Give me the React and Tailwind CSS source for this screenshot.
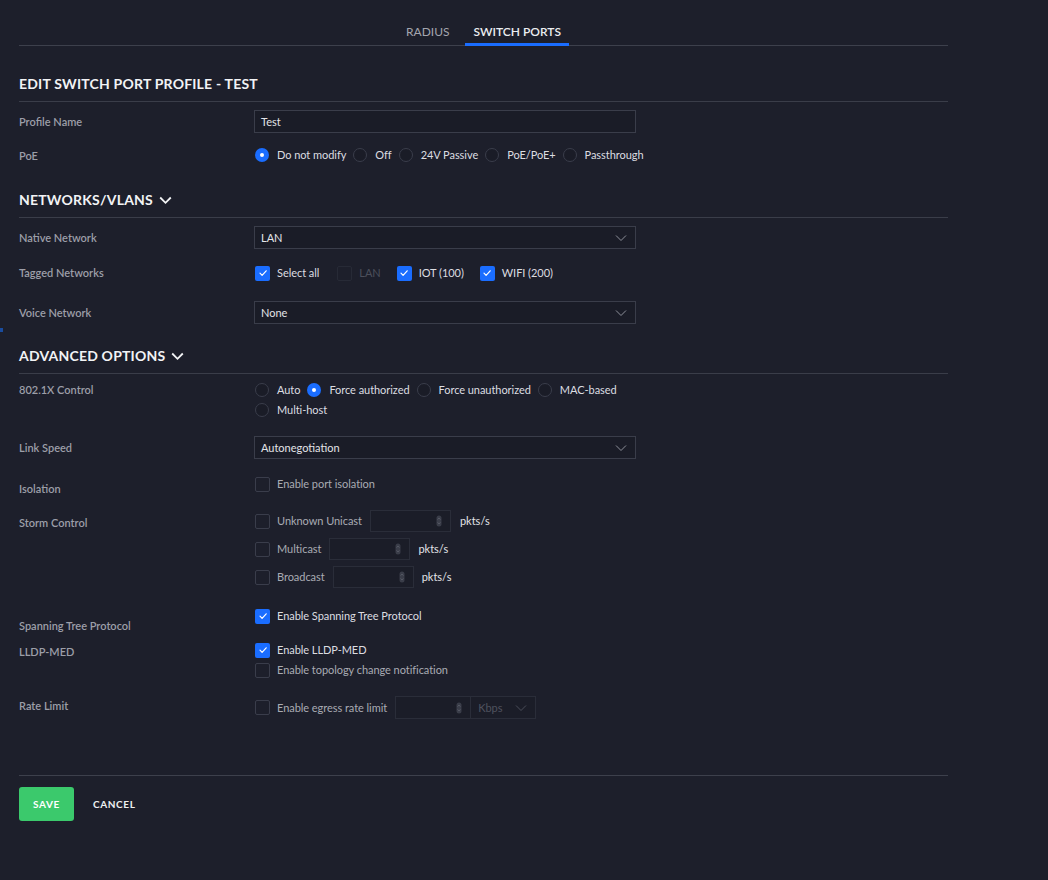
import React from "react";

const font = { fontFamily: "Lato, 'Open Sans', 'Liberation Sans', sans-serif" };

function Radio({ checked, label }) {
  return (
    <div className="flex items-center gap-[8px]">
      {checked ? (
        <span className="w-[14px] h-[14px] rounded-full bg-[#1a6dff] flex items-center justify-center">
          <span className="w-[4px] h-[4px] rounded-full bg-white" />
        </span>
      ) : (
        <span className="w-[14px] h-[14px] rounded-full border border-[#3a3d4b] bg-[#1a1c27]" />
      )}
      <span className="text-[11px] leading-[16px] tracking-[-0.05px] text-[#dcdde1]">{label}</span>
    </div>
  );
}

function Check({ checked, label, disabled, dim }) {
  return (
    <div className="flex items-center gap-[7px]">
      {checked ? (
        <span className="w-[15px] h-[15px] rounded-[2px] bg-[#1a6dff] flex items-center justify-center">
          <svg width="10" height="10" viewBox="0 0 10 10" fill="none">
            <path d="M2 5.2 L4.1 7.3 L8.2 2.8" stroke="white" strokeWidth="1.2" strokeLinecap="round" strokeLinejoin="round" />
          </svg>
        </span>
      ) : (
        <span
          className={
            disabled
              ? "w-[15px] h-[15px] rounded-[2px] border border-[#272a36]"
              : "w-[15px] h-[15px] rounded-[2px] border border-[#3a3d4b]"
          }
        />
      )}
      {label && (
        <span
          className={
            disabled
              ? "text-[11px] leading-[16px] tracking-[-0.05px] text-[#4c4f5b]"
              : dim
              ? "text-[11px] leading-[16px] tracking-[-0.05px] text-[#a9abb3]"
              : "text-[11px] leading-[16px] tracking-[-0.05px] text-[#dcdde1]"
          }
        >
          {label}
        </span>
      )}
    </div>
  );
}

function Chevron({ color = "#8d909a" }) {
  return (
    <svg width="12" height="8" viewBox="0 0 12 8" fill="none">
      <path d="M1 1.5 L6 6.5 L11 1.5" stroke={color} strokeWidth="1" />
    </svg>
  );
}

function Select({ value }) {
  return (
    <div className="w-[382px] h-[23px] border border-[#3a3d4a] bg-[#1a1c27] flex items-center justify-between pl-[6px] pr-[8px]">
      <span className="text-[11px] leading-[16px] text-[#e3e4e8]">{value}</span>
      <Chevron />
    </div>
  );
}

function Spinner() {
  return (
    <svg width="6" height="12" viewBox="0 0 6 12" fill="none">
      <rect x="0.5" y="0.5" width="5" height="11" rx="2.5" fill="#3a3d49" />
      <path d="M1.6 4.6 L3 3 L4.4 4.6" stroke="#5c5f6b" strokeWidth="0.8" />
      <path d="M1.6 7.4 L3 9 L4.4 7.4" stroke="#5c5f6b" strokeWidth="0.8" />
    </svg>
  );
}

function NumInput() {
  return (
    <div className="w-[81px] h-[22px] border border-[#2a2d39] bg-[#1b1d28] flex items-center justify-end pr-[8px]">
      <Spinner />
    </div>
  );
}

function Label({ children, pt = "pt-0" }) {
  return (
    <div className={`w-[235px] shrink-0 text-[11px] leading-[16px] font-semibold text-[#9c9ea8] ${pt}`}>{children}</div>
  );
}

function SectionHeading({ children, chevron, pt }) {
  return (
    <div className={`${pt} pb-[7px] border-b border-[#3a3d49] flex items-center gap-[6px]`}>
      <span className="text-[14px] leading-[20px] font-bold text-[#f2f3f5] tracking-[0.2px]">{children}</span>
      {chevron && (
        <svg width="13" height="9" viewBox="0 0 13 9" fill="none" className="mt-[1px]">
          <path d="M1.2 1.5 L6.5 6.8 L11.8 1.5" stroke="#f2f3f5" strokeWidth="1.8" />
        </svg>
      )}
    </div>
  );
}

export default function App() {
  return (
    <div className="min-h-[880px] w-full bg-[#1d1f2b] relative" style={font}>
      <span className="absolute left-0 top-[328px] w-[3px] h-[4px] bg-[#1a5fd0] opacity-70" />
      <div className="ml-[19px] w-[929px]">
        {/* tabs */}
        <div className="h-[46px] border-b border-[#3d404c] flex justify-center items-end">
          <div className="px-[8px] pb-[1px] border-b-[3px] border-transparent -mb-px">
            <span className="text-[12px] leading-[16px] text-[#a3a5ae]">RADIUS</span>
          </div>
          <div className="ml-[8px] px-[8px] pb-[1px] border-b-[3px] border-[#1a6dff] -mb-px">
            <span className="text-[12px] leading-[16px] font-semibold text-[#eceef1]">SWITCH PORTS</span>
          </div>
        </div>

        <SectionHeading pt="pt-[28px]">EDIT SWITCH PORT PROFILE - TEST</SectionHeading>

        <div className="mt-[8px] h-[23px] flex items-center">
          <Label pt="pt-[1px]">Profile Name</Label>
          <div className="w-[382px] h-[23px] border border-[#3a3d4a] bg-[#1a1c27] flex items-center pl-[6px]">
            <span className="text-[11px] leading-[16px] text-[#e3e4e8]">Test</span>
          </div>
        </div>

        <div className="mt-[11px] h-[22px] flex items-center">
          <Label pt="pt-[2px]">PoE</Label>
          <div className="flex items-center gap-[7px] pl-[1px]">
            <Radio checked label="Do not modify" />
            <Radio label="Off" />
            <Radio label="24V Passive" />
            <Radio label="PoE/PoE+" />
            <Radio label="Passthrough" />
          </div>
        </div>

        <SectionHeading chevron pt="pt-[24px]">NETWORKS/VLANS</SectionHeading>

        <div className="mt-[8px] h-[23px] flex items-center">
          <Label>Native Network</Label>
          <Select value="LAN" />
        </div>

        <div className="mt-[13px] h-[22px] flex items-center">
          <Label pt="pb-[1px]">Tagged Networks</Label>
          <div className="flex items-center pl-[1px]">
            <Check checked label="Select all" />
            <span className="w-[18px]" />
            <Check disabled label="LAN" />
            <span className="w-[16px]" />
            <Check checked label="IOT (100)" />
            <span className="w-[16px]" />
            <Check checked label="WIFI (200)" />
          </div>
        </div>

        <div className="mt-[17px] h-[23px] flex items-center">
          <Label>Voice Network</Label>
          <Select value="None" />
        </div>

        <SectionHeading chevron pt="pt-[22px]">ADVANCED OPTIONS</SectionHeading>

        <div className="mt-[6px] h-[40px] flex items-start">
          <Label pt="pt-[2px]">802.1X Control</Label>
          <div className="flex flex-col pl-[1px]">
            <div className="h-[20px] flex items-center gap-[7px]">
              <Radio label="Auto" />
              <Radio checked label="Force authorized" />
              <Radio label="Force unauthorized" />
              <Radio label="MAC-based" />
            </div>
            <div className="h-[20px] flex items-center">
              <Radio label="Multi-host" />
            </div>
          </div>
        </div>

        <div className="mt-[16px] h-[23px] flex items-center">
          <Label>Link Speed</Label>
          <Select value="Autonegotiation" />
        </div>

        <div className="mt-[15px] h-[20px] flex items-start">
          <Label pt="pt-[7px]">Isolation</Label>
          <div className="h-[20px] flex items-center pl-[1px]">
            <Check dim label="Enable port isolation" />
          </div>
        </div>

        <div className="mt-[16px] h-[78px] flex items-start">
          <Label pt="pt-[5px]">Storm Control</Label>
          <div className="flex flex-col gap-[6px] pl-[1px]">
            <div className="h-[22px] flex items-center">
              <Check dim label="Unknown Unicast" />
              <span className="w-[8px]" />
              <NumInput />
              <span className="ml-[9px] text-[11px] leading-[16px] text-[#e3e4e8]">pkts/s</span>
            </div>
            <div className="h-[22px] flex items-center">
              <Check dim label="Multicast" />
              <span className="w-[8px]" />
              <NumInput />
              <span className="ml-[8px] text-[11px] leading-[16px] text-[#e3e4e8]">pkts/s</span>
            </div>
            <div className="h-[22px] flex items-center">
              <Check dim label="Broadcast" />
              <span className="w-[8px]" />
              <NumInput />
              <span className="ml-[8px] text-[11px] leading-[16px] text-[#e3e4e8]">pkts/s</span>
            </div>
          </div>
        </div>

        <div className="mt-[18px] h-[20px] flex items-start">
          <Label pt="pt-[12px]">Spanning Tree Protocol</Label>
          <div className="h-[20px] flex items-center pl-[1px]">
            <Check checked label="Enable Spanning Tree Protocol" />
          </div>
        </div>

        <div className="mt-[14px] h-[40px] flex items-start">
          <Label pt="pt-[4px]">LLDP-MED</Label>
          <div className="flex flex-col pl-[1px]">
            <div className="h-[20px] flex items-center">
              <Check checked label="Enable LLDP-MED" />
            </div>
            <div className="h-[20px] flex items-center">
              <Check dim label="Enable topology change notification" />
            </div>
          </div>
        </div>

        <div className="mt-[16px] h-[23px] flex items-center">
          <Label pt="pb-[3px]">Rate Limit</Label>
          <div className="flex items-center pl-[1px]">
            <Check dim label="Enable egress rate limit" />
            <span className="w-[8px]" />
            <div className="w-[76px] h-[23px] border border-[#2a2d39] bg-[#1b1d28] flex items-center justify-end pr-[8px]">
              <Spinner />
            </div>
            <div className="w-[65px] h-[23px] border border-l-0 border-[#2a2d39] bg-[#1b1d28] flex items-center justify-between pl-[7px] pr-[8px]">
              <span className="text-[11px] leading-[16px] text-[#4f525e]">Kbps</span>
              <Chevron color="#4a4d59" />
            </div>
          </div>
        </div>

        <div className="mt-[56px] border-t border-[#3d404c]" />

        <div className="mt-[11px] flex items-center">
          <button className="w-[55px] h-[34px] rounded-[3px] bg-[#3bc96c] text-[10px] font-bold tracking-[0.6px] text-white">
            SAVE
          </button>
          <button className="ml-[19px] text-[10px] font-bold tracking-[0.6px] text-[#eef0f2]">CANCEL</button>
        </div>
      </div>
    </div>
  );
}
